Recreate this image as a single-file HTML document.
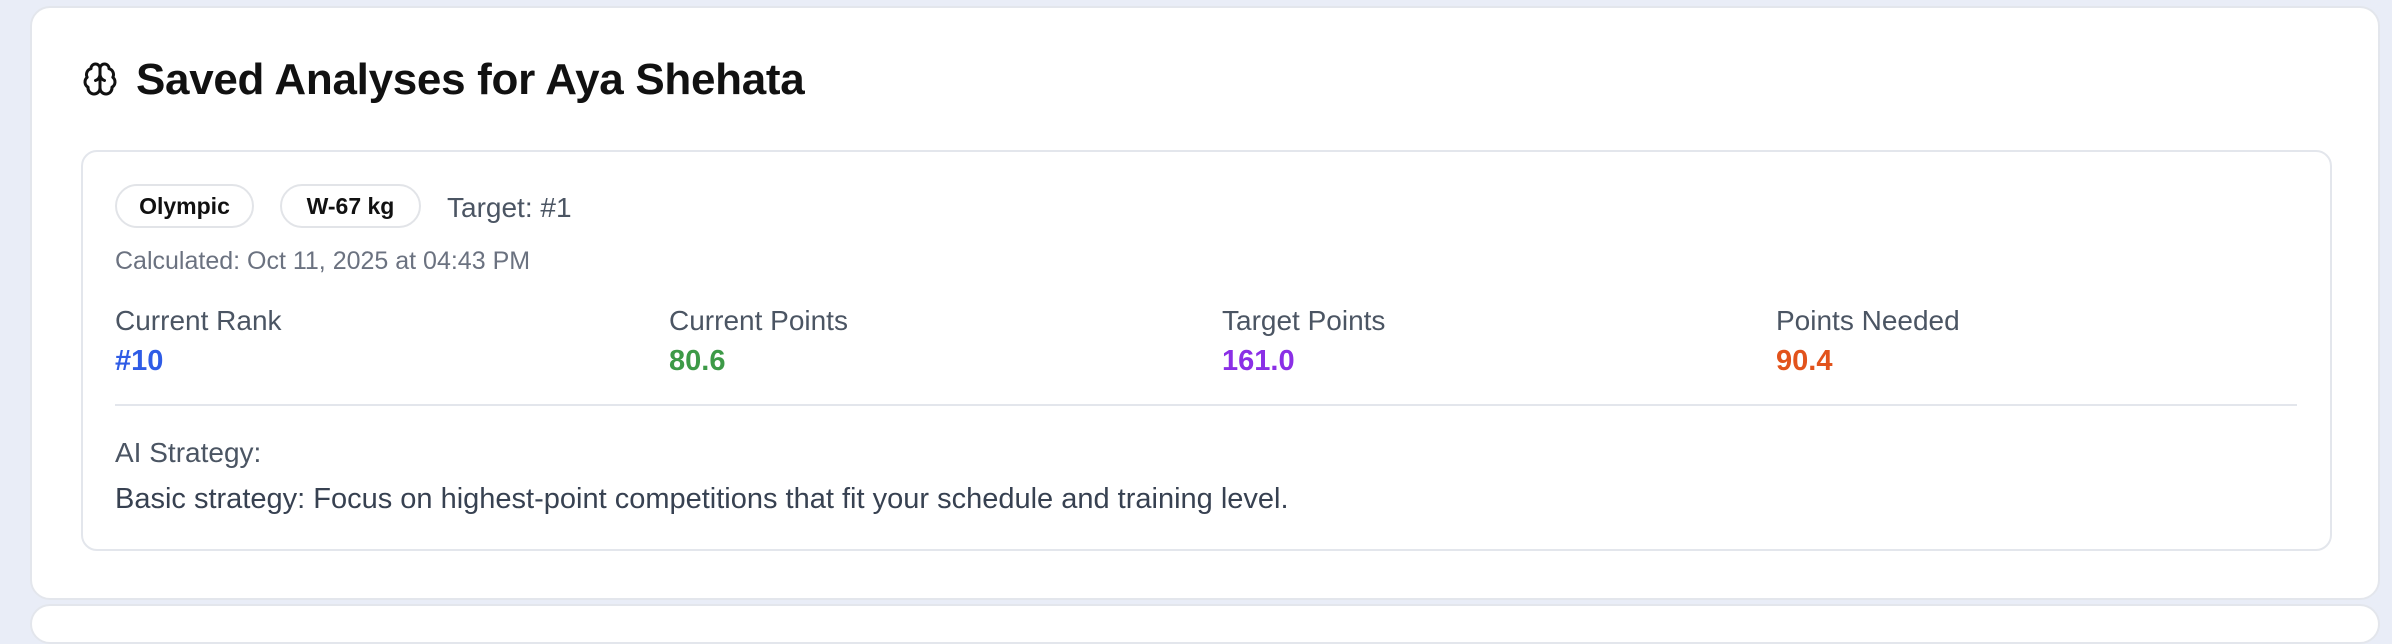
<!DOCTYPE html>
<html><head><meta charset="utf-8"><style>
*{box-sizing:border-box;margin:0;padding:0}
body{width:2392px;height:610px;overflow:hidden;background:#e9edf7;font-family:"Liberation Sans",sans-serif;position:relative}
.outer{position:absolute;left:30px;top:6px;width:2350px;height:594px;background:#fff;border:2px solid #e3e6ec;border-radius:20px}
.next{position:absolute;left:30px;top:604px;width:2350px;height:40px;background:#fff;border:2px solid #e3e6ec;border-radius:20px}
h1{position:absolute;left:136px;top:58px;font-size:44px;line-height:1;font-weight:bold;color:#111;letter-spacing:-0.3px;white-space:nowrap}
.icon{position:absolute;left:82px;top:61px}
.inner{position:absolute;left:81px;top:150px;width:2251px;height:401px;border:2px solid #e3e6ec;border-radius:16px;background:#fff}
.badge{position:absolute;top:184px;height:44px;border:2px solid #e2e4e8;border-radius:22px;font-size:23px;font-weight:bold;color:#111;display:flex;align-items:center;justify-content:center}
.t{position:absolute;color:#4b5563;white-space:nowrap;line-height:1}
.v{position:absolute;font-weight:bold;font-size:29px;top:347px;line-height:1}
</style></head><body>
<div class="outer"></div>
<div class="next"></div>
<svg class="icon" width="36" height="36" viewBox="0 0 24 24" fill="none" stroke="#111" stroke-width="2" stroke-linecap="round" stroke-linejoin="round"><path d="M12 5a3 3 0 1 0-5.997.125 4 4 0 0 0-2.526 5.77 4 4 0 0 0 .556 6.588A4 4 0 1 0 12 18Z"/><path d="M12 5a3 3 0 1 1 5.997.125 4 4 0 0 1 2.526 5.77 4 4 0 0 1-.556 6.588A4 4 0 1 1 12 18Z"/><path d="M15 13a4.5 4.5 0 0 1-3-4 4.5 4.5 0 0 1-3 4"/><path d="M12 9v9"/></svg>
<h1>Saved Analyses for Aya Shehata</h1>
<div class="inner"></div>
<div class="badge" style="left:115px;width:139px">Olympic</div>
<div class="badge" style="left:280px;width:141px">W-67 kg</div>
<div class="t" style="left:447px;top:194px;font-size:28px">Target: #1</div>
<div class="t" style="left:115px;top:249px;font-size:25px;color:#6b7280">Calculated: Oct 11, 2025 at 04:43 PM</div>
<div class="t" style="left:115px;top:307px;font-size:28px">Current Rank</div>
<div class="t" style="left:669px;top:307px;font-size:28px">Current Points</div>
<div class="t" style="left:1222px;top:307px;font-size:28px">Target Points</div>
<div class="t" style="left:1776px;top:307px;font-size:28px">Points Needed</div>
<div class="v" style="left:115px;color:#2f5ce6">#10</div>
<div class="v" style="left:669px;color:#3d9a47">80.6</div>
<div class="v" style="left:1222px;color:#8b2fe6">161.0</div>
<div class="v" style="left:1776px;color:#e2531c">90.4</div>
<div style="position:absolute;left:115px;top:404px;width:2182px;height:2px;background:#e3e6ec"></div>
<div class="t" style="left:115px;top:439px;font-size:28px">AI Strategy:</div>
<div class="t" style="left:115px;top:485px;font-size:29px;color:#374151">Basic strategy: Focus on highest-point competitions that fit your schedule and training level.</div>
</body></html>
